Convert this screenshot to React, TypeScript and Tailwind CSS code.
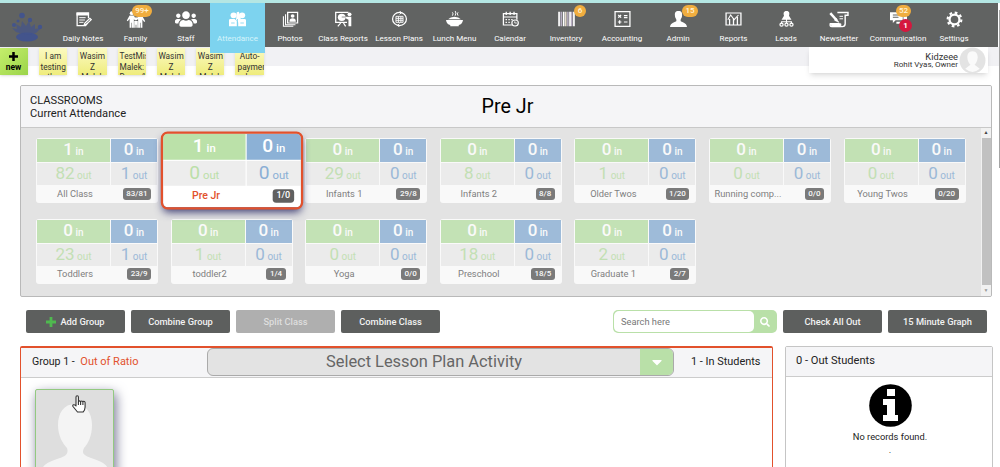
import type { ReactNode } from "react";
import { FaCaretDown, FaSearch, FaUsers } from "react-icons/fa";

const Svg = ({ children }: { children: ReactNode }) => (
  <svg
    viewBox="0 0 24 24"
    className="h-[16px] w-[17px]"
    fill="none"
    stroke="currentColor"
    strokeWidth="1.8"
    preserveAspectRatio="none"
  >
    {children}
  </svg>
);

const NotesIcon = () => (
  <Svg>
    <path d="M19 11V3H3v19h12l3-4" />
    <path d="M3 3h16v3H3z" fill="currentColor" />
    <path d="M6 10h9M6 13.5h8M6 17h6" strokeWidth="1.4" />
    <path d="M13 21l1-3 7-7 2 2-7 7z" />
  </Svg>
);

const FamilyIcon = () => (
  <svg viewBox="0 0 26 24" className="h-[17px] w-[20px]" fill="currentColor">
    <circle cx="7" cy="3" r="2.8" />
    <circle cx="19" cy="4" r="2.8" />
    <circle cx="13" cy="11" r="2.2" />
    <path d="M4 6.500h6l3 6-1.400 1L10 11v12.500H7.400v-7h-.8v7H4V11l-2.600 3.500L0 13.500z" />
    <path d="M16 7.500h6l4 7-1.400 1L22 12v11.500h-2.600v-7h-.8v7H16V12l-2-1z" />
    <path d="M10.500 14h5v9.500h-2v-4h-1v4h-2z" />
  </svg>
);

const AttendanceIcon = () => (
  <Svg>
    <g fill="currentColor" stroke="none">
      <circle cx="6.500" cy="6.500" r="4.300" />
      <circle cx="18.500" cy="6.500" r="4.300" />
      <path d="M0 14q0-2 2-2h6l3 3v8H0zM13 23v-6l4-5h5q2 0 2 2v9z" />
      <path d="M11 2l3-1 3 12-3 5-4-5z" />
    </g>
    <path d="M12 12v11M3 18h5M16 18h5" stroke="#7dd3ef" strokeWidth="1.200" />
  </Svg>
);

const PhotosIcon = () => (
  <Svg>
    <path d="M8 2h14v16H8z" />
    <path d="M5 5v15.500h14M2 8v15h14" strokeWidth="1.500" />
    <circle cx="15" cy="7.500" r="2.700" fill="currentColor" stroke="none" />
    <path d="M10.500 16q0-5 4.500-5t4.500 5z" fill="currentColor" stroke="none" />
  </Svg>
);

const ClassReportsIcon = () => (
  <Svg>
    <path d="M17 17H1V2h18" />
    <circle cx="9.500" cy="9.500" r="5.500" fill="currentColor" stroke="none" />
    <path d="M9.500 9H15" stroke="#616362" strokeWidth="1" />
    <path d="M8 18l-4 5M12 18l3 5" />
    <circle cx="20.500" cy="5" r="2.800" fill="currentColor" stroke="none" />
    <path d="M15 8.500h8V23h-4V13l-4-2z" fill="currentColor" stroke="none" />
  </Svg>
);

const LessonPlansIcon = () => (
  <Svg>
    <circle cx="12" cy="12" r="9.800" />
    <path d="M12 0l3 2.500-3 2.500M12 24l-3-2.500 3-2.500" strokeWidth="1.400" />
    <path d="M7 8h10v9H7zM7 11h10M7 14h10M10.500 8v9M14 8v9" strokeWidth="1.300" />
  </Svg>
);

const LunchIcon = () => (
  <Svg>
    <path d="M9 2q2 2 0 5M13 0q2 3 0 7M17 2q-2 2 0 5" strokeWidth="1.400" />
    <path d="M3 12.500q3-4 9-4t9 4z" fill="currentColor" stroke="none" />
    <path d="M0 13.500h24q-1 6.500-6 7.500v2H6v-2q-5-1-6-7.500z" fill="currentColor" stroke="none" />
  </Svg>
);

const CalendarIcon = () => (
  <Svg>
    <path d="M14 21H2V4h19v9M2 9h19M6 1v5M11.500 1v5M17 1v5" />
    <path d="M5 13h2M9 13h2M13 13h2M5 17h2M9 17h2" />
    <circle cx="18.500" cy="18" r="4.500" fill="#616362" />
    <path d="M18 15.500V18h3" strokeWidth="1.200" />
  </Svg>
);

const InventoryIcon = () => (
  <Svg>
    <path d="M1.500 1v22M8 1v22M17 1v22M22.500 1v22" strokeWidth="2.400" />
    <path d="M4.500 1v22M19.500 1v22M14 1v22" stroke="#d5c8e4" strokeWidth="1.600" />
    <path d="M11 1v22" strokeWidth="2" stroke="#f0e6d6" />
  </Svg>
);

const AccountingIcon = () => (
  <Svg>
    <path d="M1.500 1h21v22h-21z" />
    <path d="M6 6l4 4M10 6l-4 4M14 7h5M14 10h5M8 14v5M5.500 16.500h5M14 16.500h5" />
  </Svg>
);

const AdminIcon = () => (
  <Svg>
    <path
      d="M12 0c-4.500 0-5.500 3-5 7 0 3 1.500 4 2 6v2C8 17 .5 17 0 24h24c-.5-7-8-7-9-9v-2c.5-2 2-3 2-6 .5-4-.5-7-5-7z"
      fill="currentColor"
      stroke="none"
    />
  </Svg>
);

const ReportsIcon = () => (
  <Svg>
    <path d="M1.500 3h21v18h-21z" />
    <path d="M6.500 21v-9M12 21V11M17.500 21V9" />
    <path d="M4 13l4-7 5 7 6-7" strokeWidth="1.500" />
  </Svg>
);

const LeadsIcon = () => (
  <Svg>
    <path
      d="M12 0C7.500 0 7.500 4 8.500 7L5 13h14l-3.500-6c1-3 1-7-3.500-7z"
      fill="currentColor"
      stroke="none"
    />
    <path d="M12 12v6M5 19v-3h14v3" strokeWidth="1.500" />
    <circle cx="5" cy="20.500" r="2.200" />
    <circle cx="12" cy="20.500" r="2.200" />
    <circle cx="19" cy="20.500" r="2.200" />
  </Svg>
);

const NewsletterIcon = () => (
  <svg viewBox="0 0 28 24" className="h-[17px] w-[21px]" fill="none" stroke="currentColor">
    <path d="M11 2h15v4h-4v12q0 4-4 4H3q-3 0-2-4h13" strokeWidth="2" />
    <path d="M1 3l9 10" strokeWidth="3.500" />
    <path d="M9 10l4 6-6-3zM2 18h14v4H3z" fill="currentColor" />
    <path d="M14 7.500h5M14 11h5" strokeWidth="1.400" />
  </svg>
);

const CommunicationIcon = () => (
  <Svg>
    <path d="M0 2h18v12H8l-4 4v-4H0z" fill="currentColor" stroke="none" />
    <path d="M19 8h5v11h-3v4l-4-4H9v-3h10z" fill="currentColor" stroke="none" />
    <path d="M4 6h10M4 9.500h8" stroke="#616362" strokeWidth="1.500" />
  </Svg>
);

const GearIcon = () => (
  <svg viewBox="0 0 24 24" className="h-[17px] w-[17px]" fill="none" stroke="currentColor">
    <circle cx="12" cy="12" r="7" strokeWidth="3.200" />
    <circle cx="12" cy="12" r="9.700" strokeWidth="3" strokeDasharray="3.800 3.818" />
  </svg>
);

const PlusIcon = ({ className }: { className: string }) => (
  <svg viewBox="0 0 10 10" className={`shrink-0 ${className}`} stroke="currentColor" strokeWidth="2.800">
    <path d="M5 0v10M0 5h10" />
  </svg>
);

const navItems = [
  { label: "Daily Notes", icon: <NotesIcon />, width: "w-[52px]" },
  { label: "Family", icon: <FamilyIcon />, width: "w-[53px]", badge: "99+" },
  { label: "Staff", icon: <FaUsers className="h-[18px] w-[22px]" />, width: "w-[48px]" },
  { label: "Attendance", icon: <AttendanceIcon />, width: "w-[55px]", active: true },
  { label: "Photos", icon: <PhotosIcon />, width: "w-[50px]" },
  { label: "Class Reports", icon: <ClassReportsIcon />, width: "w-[56px]" },
  { label: "Lesson Plans", icon: <LessonPlansIcon />, width: "w-[56px]" },
  { label: "Lunch Menu", icon: <LunchIcon />, width: "w-[55px]" },
  { label: "Calendar", icon: <CalendarIcon />, width: "w-[56px]" },
  { label: "Inventory", icon: <InventoryIcon />, width: "w-[56px]", badge: "6" },
  { label: "Accounting", icon: <AccountingIcon />, width: "w-[56px]" },
  { label: "Admin", icon: <AdminIcon />, width: "w-[56px]", badge: "15" },
  { label: "Reports", icon: <ReportsIcon />, width: "w-[55px]" },
  { label: "Leads", icon: <LeadsIcon />, width: "w-[50px]" },
  { label: "Newsletter", icon: <NewsletterIcon />, width: "w-[56px]" },
  { label: "Communication", icon: <CommunicationIcon />, width: "w-[62px]", badge: "52", alert: "1" },
  { label: "Settings", icon: <GearIcon />, width: "w-[50px]" },
];

const badgePosition: Record<string, string> = {
  "99+": "left-[23px] w-[20px]",
  "6": "left-[36px] w-[12px]",
  "15": "left-[32px] w-[16px]",
  "52": "left-[29px] w-[15px]",
};

const notes = [
  ["I am", "testing", "the"],
  ["Wasim", "Z", "Malek"],
  ["TestMis", "Malek:", "Demo1"],
  ["Wasim", "Z", "Malek"],
  ["Wasim", "Z", "Malek"],
  ["Auto-", "paymen", "due"],
];

const rooms = [
  { name: "All Class", counts: [1, 0, 82, 1], ratio: "83/81" },
  { name: "Pre Jr", counts: [1, 0, 0, 0], ratio: "1/0", selected: true },
  { name: "Infants 1", counts: [0, 0, 29, 0], ratio: "29/8" },
  { name: "Infants 2", counts: [0, 0, 8, 0], ratio: "8/8" },
  { name: "Older Twos", counts: [0, 0, 1, 0], ratio: "1/20" },
  { name: "Running comp...", counts: [0, 0, 0, 0], ratio: "0/0" },
  { name: "Young Twos", counts: [0, 0, 0, 0], ratio: "0/20" },
  { name: "Toddlers", counts: [0, 0, 23, 1], ratio: "23/9" },
  { name: "toddler2", counts: [0, 0, 1, 0], ratio: "1/4" },
  { name: "Yoga", counts: [0, 0, 0, 0], ratio: "0/0" },
  { name: "Preschool", counts: [0, 0, 18, 0], ratio: "18/5" },
  { name: "Graduate 1", counts: [0, 0, 2, 0], ratio: "2/7" },
];

const Navbar = () => (
  <nav className="mr-[2px] flex h-[44px] bg-[#616362] text-white">
    <div className="w-[57px] pt-[9px] pl-[11px]">
      <svg viewBox="0 0 32 30" className="h-[30px] w-[32px]" fill="#43548c">
        <ellipse cx="16" cy="25" rx="11" ry="4.500" />
        <path
          d="M5 20l-4-4 5 1-1-5 5 3 1-6 4 5 3-5 2 6 4-3v5l6-1-5 5q-10 3-20-1z"
          opacity=".7"
        />
        <circle cx="11" cy="3.500" r="2.800" />
        <circle cx="3" cy="13" r="2" />
        <circle cx="19" cy="8" r="2.200" />
        <circle cx="29" cy="15" r="2.200" />
        <circle cx="7" cy="9" r="1.500" />
      </svg>
    </div>
    {navItems.map((item) => (
      <a
        key={item.label}
        className={`relative flex shrink-0 flex-col items-center pt-[7px] ${item.width} ${
          item.active ? "z-10 h-[50px] bg-[#7dd3ef]" : ""
        }`}
      >
        <span className="flex h-[18px] items-center">{item.icon}</span>
        <span
          className={`mt-[3px] text-[8px] leading-[16px] whitespace-nowrap ${
            item.active ? "text-[#d5f4fb]" : ""
          }`}
        >
          {item.label}
        </span>
        {item.badge && (
          <span
            className={`absolute top-[2px] flex h-[12px] items-center justify-center rounded-full bg-[#f0ad3f] text-[8px] font-medium text-[#fff3d8] ${badgePosition[item.badge]}`}
          >
            {item.badge}
          </span>
        )}
        {item.alert && (
          <span className="absolute top-[16px] left-[32px] flex h-[13px] w-[13px] items-center justify-center rounded-full bg-[#d5173e] text-[8px] font-bold">
            {item.alert}
          </span>
        )}
      </a>
    ))}
  </nav>
);

const NotesBar = () => (
  <div className="flex h-[38px] justify-between bg-[linear-gradient(#f1f1f4_19px,#fff_19px)]">
    <div className="flex gap-[11px] pt-px">
      <button className="flex h-[27px] w-[28px] flex-col items-center bg-linear-to-br from-[#c5ef6b] to-[#9bd44a] pt-[4px] pr-px text-[8.500px] leading-[10px] font-bold text-black shadow-sm">
        <PlusIcon className="h-[9px] w-[9px]" />
        <span className="mt-px">new</span>
      </button>
      {notes.map((lines, i) => (
        <div
          key={i}
          className="h-[27px] w-[28.300px] overflow-hidden bg-linear-to-b from-[#fbfac0] to-[#efec7c] pt-[3px] text-center text-[8.300px] leading-[10.500px] text-[#333] shadow-sm"
        >
          {lines.map((line, j) => (
            <div
              key={j}
              className={i === 2 || line === "paymen" ? "-mr-[3px] pl-[2px] text-left" : ""}
            >
              {line}
            </div>
          ))}
        </div>
      ))}
    </div>
    <div className="relative mr-[12px] flex h-[26px] w-[179px] justify-end bg-white shadow-md">
      <div className="pt-[6px] pr-[30px] text-right text-[#333]">
        <div className="text-[9.300px] leading-[8px]">Kidzeee</div>
        <div className="text-[8px] leading-[8px] whitespace-nowrap">Rohit Vyas, Owner</div>
      </div>
      <svg viewBox="0 0 26 26" className="absolute top-0 right-[2px] h-[27px] w-[27px]">
        <circle cx="13" cy="13" r="12.500" fill="#e3e3e3" />
        <path d="M13 4c-4 0-5 3-5 6 0 3 2 6 3 7l-5 4q7 6 14 0l-5-4c1-1 3-4 3-7 0-3-1-6-5-6z" fill="#fafafa" />
      </svg>
    </div>
  </div>
);

const Count = ({ value, unit, className }: { value: number; unit: string; className: string }) => (
  <div className={`flex items-baseline justify-center gap-[2.500px] ${className}`}>
    <span className="text-[17px] leading-[21px]">{value}</span>
    <span className="text-[10px]">{unit}</span>
  </div>
);

const RoomCard = ({ room }: { room: (typeof rooms)[number] }) => {
  const [greenIn, blueIn, greenOut, blueOut] = room.counts;
  return (
    <div
      className={`h-[65px] w-[122px] overflow-hidden bg-white ${
        room.selected
          ? "z-10 scale-[1.130] rounded-[4px] shadow-[0_4px_8px_#3b3b72] outline-2 outline-[#e2512c]"
          : "rounded-[3px] p-px opacity-80"
      }`}
    >
      <div className="grid grid-cols-[73px_1fr] gap-x-px">
        <Count value={greenIn} unit="in" className="h-[23px] bg-[#bbe1a9] font-medium text-white" />
        <Count value={blueIn} unit="in" className="h-[23px] bg-[#8cb1d6] font-medium text-white" />
        <Count value={greenOut} unit="out" className="mt-px h-[22px] bg-[#ededed] text-[#bbdfa9]" />
        <Count value={blueOut} unit="out" className="mt-px h-[22px] bg-[#ededed] text-[#8aafd5]" />
      </div>
      <div className="flex h-[17px] items-center justify-between pr-[6px]">
        <span
          className={`w-[76px] text-center text-[9.300px] whitespace-nowrap ${
            room.selected ? "font-medium text-[#e2512c]" : "text-[#666]"
          }`}
        >
          {room.name}
        </span>
        <span className="rounded-[3px] bg-[#606060] px-[3.500px] text-[8px] leading-[12px] font-medium text-white">
          {room.ratio}
        </span>
      </div>
    </div>
  );
};

const Classrooms = () => (
  <section className="mr-[8px] ml-[20px] h-[212px] overflow-hidden rounded-[2px] border border-[#b9b9b9] bg-[#e3e3e3]">
    <header className="grid h-[42px] grid-cols-[1fr_auto_1fr] items-center border-b border-[#c8c8c8] bg-[#f5f5f7] pl-[9px] text-[#222]">
      <div className="text-[11.150px] leading-[13px]">
        <div>CLASSROOMS</div>
        <div>Current Attendance</div>
      </div>
      <h1 className="-translate-x-[3px] text-[19.700px] text-black">Pre Jr</h1>
    </header>
    <div className="flex h-[168px] justify-between">
      <div className="grid grid-cols-[repeat(7,122px)] content-start gap-x-[12.600px] gap-y-[15.500px] pt-[10px] pl-[15px]">
        {rooms.map((room) => (
          <RoomCard key={room.name} room={room} />
        ))}
      </div>
      <div className="flex w-[10px] flex-col items-center justify-between bg-[#f1f1f1]">
        <span className="flex h-[10px] items-center text-[5px] text-[#444]">▲</span>
        <span className="w-[9px] flex-1 bg-[#c1c1c1]" />
        <span className="flex h-[11px] items-center text-[5px] text-[#999]">▼</span>
      </div>
    </div>
  </section>
);

const ToolButton = ({ children, disabled }: { children: ReactNode; disabled?: boolean }) => (
  <button
    className={`flex h-[23px] w-[99px] items-center justify-center gap-[4px] rounded-[2px] text-[9.300px] font-medium ${
      disabled ? "bg-[#afafaf] text-[#dedede]" : "bg-[#5d5f5e] text-[#f2f2f2]"
    }`}
  >
    {children}
  </button>
);

const Toolbar = () => (
  <div className="flex justify-between pt-[13px] pr-[13px] pl-[26px]">
    <div className="flex gap-[6px]">
      <ToolButton>
        <PlusIcon className="h-[10px] w-[10px] text-[#4fb94f]" />
        Add Group
      </ToolButton>
      <ToolButton>Combine Group</ToolButton>
      <ToolButton disabled>Split Class</ToolButton>
      <ToolButton>Combine Class</ToolButton>
    </div>
    <div className="flex gap-[6px]">
      <div className="flex h-[23px] w-[164px] rounded-[5px] bg-[#b9e0a8] p-px">
        <div className="flex-1 rounded-[5px] bg-white pl-[7px] text-[9.300px] leading-[21px] text-[#777]">
          Search here
        </div>
        <div className="flex w-[22px] items-center justify-center text-white">
          <FaSearch className="h-[10px] w-[10px]" />
        </div>
      </div>
      <ToolButton>Check All Out</ToolButton>
      <ToolButton>15 Minute Graph</ToolButton>
    </div>
  </div>
);

const Student = () => (
  <div className="relative mt-[11px] ml-[14px] h-[100px] w-[79px] rounded-[2px] border border-[#93c981] bg-[#dedede] shadow-[2px_4px_12px_#777795]">
    <svg viewBox="0 0 77 98" className="h-full w-full" fill="#f4f4f4">
      <path d="M39 14C28 14 22 23 22 35c0 11 5 19 9 23 2 6-2 8-7 10-12 4-19 7-19 16v14h68V84c0-9-6-12-18-16-6-2-10-4-7-10 4-4 8-12 8-23 0-12-6-21-17-21z" />
    </svg>
    <svg
      viewBox="0 0 14 18"
      className="absolute top-[5px] left-[36px] h-[18px] w-[14px]"
      fill="white"
      stroke="#333"
      strokeWidth="1.100"
      strokeLinejoin="round"
    >
      <path d="M4 10V2q0-1.300 1.200-1.300T6.400 2v5q0-1.100 1-1.100t1.200 1.100q0-1 1.100-1t1.200 1.200q0-.9 1-.9t1.200 1.300V12q0 3-2 5H5.500L1 11.500q-.7-1.400.5-1.700T4 11z" />
      <path d="M6.400 7v3M8.600 7v3M10.900 7.500V10" fill="none" />
    </svg>
  </div>
);

const Groups = () => (
  <div className="flex gap-[12px] pt-[13px] pr-[7px] pl-[20px]">
    <section className="h-[140px] w-[753px] rounded-t-[2px] border-[1.500px] border-t-2 border-[#e2512c] bg-white">
      <header className="flex h-[30px] items-center border-b border-[#ccc] bg-[#f5f5f7] text-[10.600px] text-[#222]">
        <span className="w-[186px] pl-[11px] whitespace-nowrap">
          Group 1 - <span className="ml-[3px] text-[11px] text-[#e2512c]">Out of Ratio</span>
        </span>
        <div className="-mt-px flex h-[28px] w-[467px] overflow-hidden rounded-[6px] border border-[#aaa] bg-[#e3e3e3]">
          <span className="flex-1 text-center text-[16.400px] leading-[26px] text-[#666]">
            Select Lesson Plan Activity
          </span>
          <span className="flex w-[33px] items-center justify-center bg-[#b9e0a8] text-white">
            <FaCaretDown className="h-[16px] w-[14px]" />
          </span>
        </div>
        <span className="pl-[17px] text-[10.900px] whitespace-nowrap">1 - In Students</span>
      </header>
      <Student />
    </section>
    <section className="h-[140px] w-[208px] rounded-t-[2px] border border-[#c5c5c5] bg-white">
      <header className="flex h-[30px] items-center border-b border-[#ccc] bg-[#f5f5f7] pl-[10px] text-[11.100px] text-[#222]">
        0 - Out Students
      </header>
      <div className="flex flex-col items-center pt-[7px] pl-[2px] text-[9.300px] text-[#222]">
        <svg viewBox="0 0 43 43" className="h-[43px] w-[43px]">
          <circle cx="21.500" cy="21.500" r="21.300" fill="#000" />
          <path d="M18 5h8v7h-8zM14 15h12v16h3v6H14v-6h4V21h-4z" fill="#fff" />
        </svg>
        <p className="mt-[3px] leading-[14px]">No records found.</p>
        <p className="leading-[12px]">.</p>
      </div>
    </section>
  </div>
);

const App = () => (
  <div className="flex h-[467px] w-[1000px] overflow-hidden bg-white font-['Roboto',sans-serif]">
    <main className="w-[1000px] shrink-0">
      <div className="h-[3px] bg-[#b4e6e3]" />
      <Navbar />
      <NotesBar />
      <Classrooms />
      <Toolbar />
      <Groups />
    </main>
    <div className="z-20 mt-[10px] -ml-px h-[158px] w-px shrink-0 bg-[#a5a5a5]" />
  </div>
);

export default App;
